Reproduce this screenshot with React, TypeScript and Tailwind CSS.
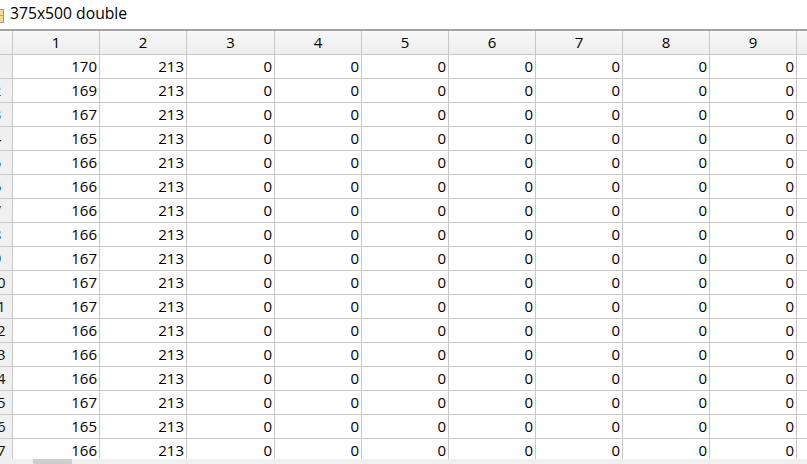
import React from "react";

const firstCol = [170, 169, 167, 165, 166, 166, 166, 166, 167, 167, 167, 166, 166, 166, 167, 165, 166];
const colWidths = ["w-[87px]", "w-[87px]", "w-[88px]", "w-[87px]", "w-[87px]", "w-[87px]", "w-[87px]", "w-[87px]", "w-[87px]"];

const font = { fontFamily: '"Open Sans", "Noto Sans", sans-serif' };

const RowHead = ({ n }: { n: number }) => (
  <div className="w-[13px] shrink-0 border-r border-[#c8c8c8] bg-[#f0f0f0] overflow-hidden flex items-center">
    <div className="w-[30px] -ml-[18px] shrink-0 text-center text-[#101010]">{n}</div>
  </div>
);

const App = () => {
  return (
    <div className="w-[807px] h-[464px] overflow-hidden bg-white flex flex-col text-[15px] text-black" style={font}>
      {/* title bar */}
      <div className="h-[31px] shrink-0 flex items-center border-b-2 border-[#a3a3a3] bg-white">
        <div className="w-[4px] h-[14px] mt-[2px] bg-[#f3dc8e] border-y border-r border-[#9c9c9c] flex flex-col justify-center">
          <div className="h-px bg-[#b9a36a]" />
        </div>
        <span className="ml-[6px] leading-none -mt-[2px] text-[15.7px]">375x500 double</span>
      </div>

      {/* column headers */}
      <div className="h-[24px] shrink-0 flex border-b border-[#c8c8c8] bg-gradient-to-b from-[#f7f7f7] to-[#eeeeee]">
        <div className="w-[13px] shrink-0 border-r border-[#c8c8c8]" />
        {colWidths.map((w, i) => (
          <div key={i} className={`${w} shrink-0 border-r border-[#c8c8c8] flex items-center justify-center`}>
            {i + 1}
          </div>
        ))}
        <div className="flex-1" />
      </div>

      {/* body */}
      <div className="flex-1 overflow-hidden">
        {firstCol.map((v, r) => (
          <div key={r} className="h-[24px] flex border-b border-[#c8c8c8]">
            <RowHead n={r + 1} />
            {colWidths.map((w, i) => (
              <div key={i} className={`${w} shrink-0 border-r border-[#c8c8c8] flex items-center justify-end pr-[2px]`}>
                {i === 0 ? v : i === 1 ? 213 : 0}
              </div>
            ))}
            <div className="flex-1" />
          </div>
        ))}
      </div>

      {/* horizontal scrollbar */}
      <div className="h-[5px] shrink-0 bg-[#f0f0f0] flex">
        <div className="w-[33px]" />
        <div className="w-[39px] bg-[#cdcdcd]" />
      </div>
    </div>
  );
};

export default App;
